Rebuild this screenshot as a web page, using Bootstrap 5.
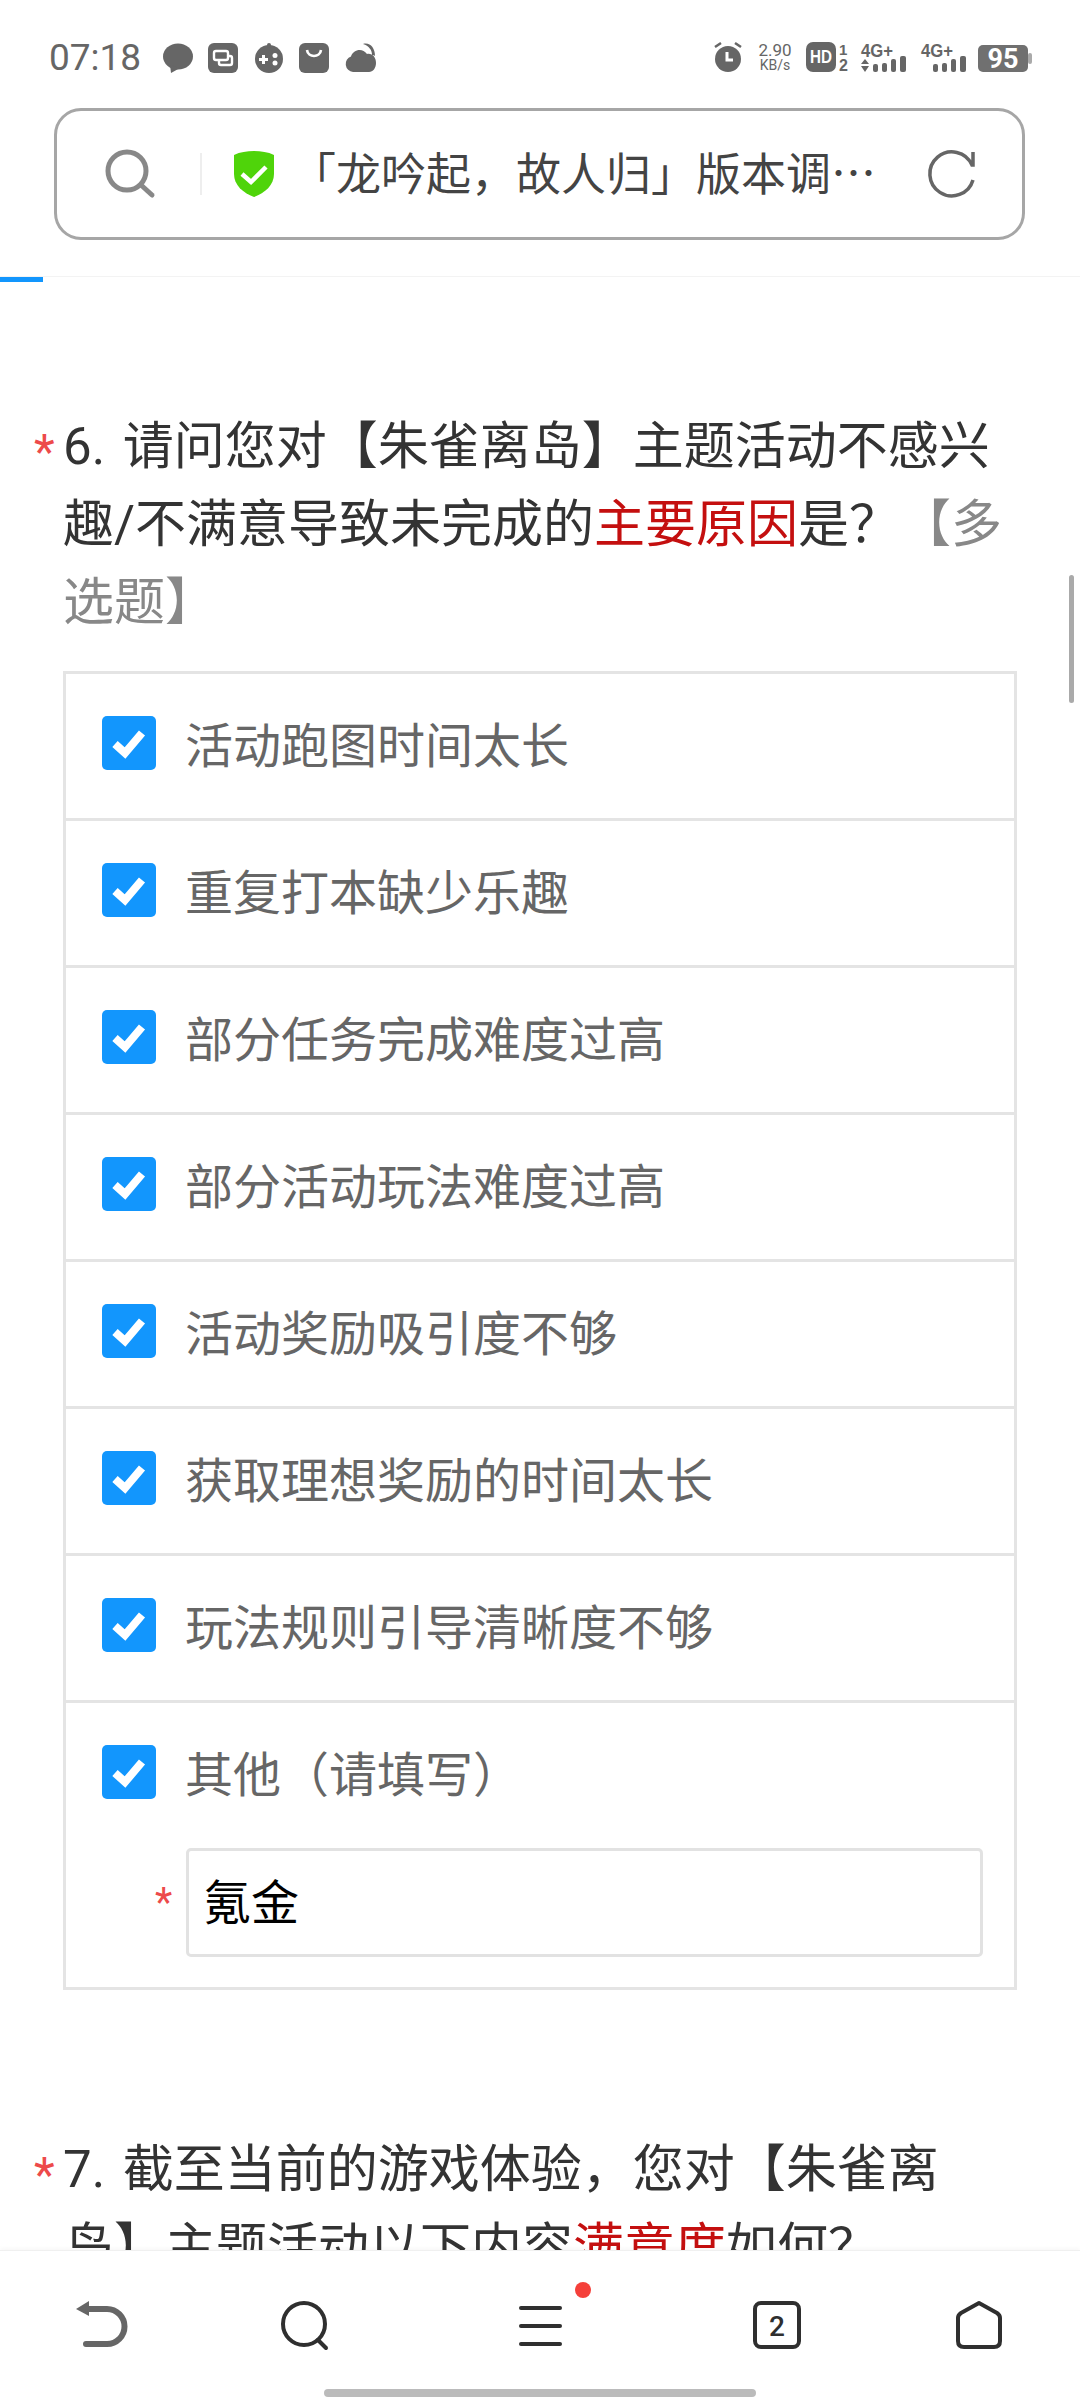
<!DOCTYPE html>
<html lang="zh-CN">

<head>
    <meta charset="UTF-8">
    <title>问卷</title>
    <meta name="viewport" content="width=device-width, initial-scale=1">

    <!-- Bootstrap CSS -->
    <link href="https://cdn.jsdelivr.net/npm/bootstrap@5.3.3/dist/css/bootstrap.min.css" rel="stylesheet">

    <style>
        html,
        body {
            height: 2400px;
            overflow: hidden;
        }

        body {
            position: relative;
            background: #fff;
            font-family: Roboto, "Noto Sans CJK SC", sans-serif;
            color: #333;
        }

        svg {
            display: block;
            flex: none;
            overflow: visible;
        }

        /* barra de estado */
        .status-row {
            height: 108px;
            padding: 42px 48px 36px 49px;
            color: #666;
        }

        .status-time {
            font-size: 37px;
            line-height: 32px;
            width: 98px;
        }

        .status-left {
            gap: 15.6px;
        }

        .speed-text {
            width: 42px;
            margin: 0 10px 0 11px;
            text-align: center;
            font-size: 17px;
            line-height: 15px;
            padding-top: 1px;
        }

        .speed-text span {
            display: block;
            font-size: 14px;
            line-height: 14px;
        }

        /* barra de direcciones */
        .addr-bar {
            height: 132px;
            margin: 0 55px 36px 54px;
            border: 3px solid #a6a6a6;
            border-radius: 27px;
            padding: 0 45px 0 48px;
        }

        .addr-sep {
            width: 2px;
            height: 42px;
            background: #eee;
            margin: 0 31px 0 45px;
        }

        .addr-text {
            font-size: 45px;
            line-height: 60px;
            color: #444;
            margin-left: 16px;
            padding-top: 4px;
            white-space: nowrap;
            flex: 1;
        }

        .load-track {
            height: 6px;
            border-radius: 0;
            background: #fff;
            border-top: 1px solid #f3f3f3;
            --bs-progress-bar-bg: #1296fd;
        }

        /* preguntas */
        .q-row {
            padding: 0 70px 0 34px;
            font-size: 51px;
            line-height: 78px;
        }

        .q-first {
            margin-top: 126px;
        }

        .q-second {
            margin-top: 141px;
        }

        .q-num {
            margin-right: 5px;
        }

        .q-star {
            width: 29px;
            flex: none;
            color: #ed4a4a;
            font-size: 48px;
            line-height: 78px;
            margin-top: 5px;
        }

        .q-red {
            color: #c40f0f;
        }

        .q-gray {
            color: #888;
        }

        .opt-list {
            margin: 29px 63px 0 63px;
            --bs-list-group-border-color: #e4e4e4;
            --bs-list-group-border-width: 3px;
            --bs-list-group-border-radius: 0;
            --bs-list-group-item-padding-x: 0;
            --bs-list-group-item-padding-y: 0;
        }

        .opt-item {
            height: 147px;
            padding: 2px 0 0 36px !important;
            display: flex;
            align-items: center;
            gap: 29px;
            font-size: 48px;
            color: #666;
        }

        .opt-item:first-child {
            height: 150px;
        }

        .opt-item:last-child {
            display: block;
            height: 287px;
            padding-top: 37px !important;
        }

        .opt-check.opt-check[type=checkbox] {
            width: 54px;
            height: 54px;
            margin: -9px 0 0;
            flex: none;
            border: 0;
            border-radius: 5px;
            --bs-form-check-bg-image: url("data:image/svg+xml,%3csvg xmlns='http://www.w3.org/2000/svg' viewBox='0 0 54 54'%3e%3cpath fill='none' stroke='%23fff' stroke-width='8' d='M13 28l10 9 17-20'/%3e%3c/svg%3e");
        }

        .opt-check:checked {
            background-color: #1296fd;
        }

        .other-row {
            gap: 29px;
        }

        .other-fill {
            margin: 36px 31px 0 53px;
        }

        .other-star {
            width: 31px;
            flex: none;
            color: #ed4a4a;
            font-size: 40px;
            line-height: 46px;
        }

        .other-input {
            height: 109px;
            padding: 0 0 8px 14px;
            font-size: 48px;
            color: #000;
            border: 3px solid #e2e2e2;
            border-radius: 5px;
            font-family: inherit;
        }

        /* scrollbar y barra inferior, van encima del contenido */
        .page-scroll {
            position: absolute;
            left: 1069px;
            top: 575px;
            width: 5px;
            height: 128px;
            background: #aaa;
            border-radius: 3px;
        }

        .bottom-bar {
            position: absolute;
            left: 0;
            right: 0;
            bottom: 0;
            height: 150px;
            background: #fff;
            border-top: 1px solid #f0f0f0;
            box-shadow: 0 -2px 4px rgba(0, 0, 0, .03);
            padding: 50px 0 0 76px;
        }

        .tool-search {
            margin-left: 154px;
        }

        .tool-menu {
            margin: 5px 0 0 191px;
        }

        .tool-tabs {
            margin-left: 191px;
        }

        .tool-home {
            margin-left: 155px;
        }

        .sig-second {
            margin-left: 12px;
        }

        .sig-first {
            margin-left: 11px;
        }

        .batt-icon {
            margin-left: 9px;
        }

        .menu-dot {
            position: absolute;
            left: 575px;
            top: 31px;
            width: 16px;
            height: 16px;
            border-radius: 50%;
            background: #f5403a;
        }

        .home-pill {
            position: absolute;
            left: 324px;
            bottom: 3px;
            width: 432px;
            height: 8px;
            border-radius: 4px;
            background: #bbb;
        }
    </style>
</head>

<body>

    <!-- Barra de estado -->
    <div class="status-row d-flex align-items-start justify-content-between">
        <div class="d-flex align-items-center status-left">
            <div class="status-time">07:18</div>
            <svg width="30" height="30" viewBox="0 0 30 30" fill="#666">
                <ellipse cx="15" cy="13.5" rx="15" ry="13" />
                <path d="M7 22l1 8 9-5z" />
            </svg>
            <svg width="30" height="30" viewBox="0 0 30 30">
                <rect width="30" height="30" rx="6" fill="#666" />
                <g fill="none" stroke="#fff" stroke-width="2.4">
                    <rect x="6" y="8" width="14" height="9" rx="2" />
                    <path d="M11 17v3a2 2 0 0 0 2 2h9a2 2 0 0 0 2-2v-5a2 2 0 0 0-2-2h-2" />
                </g>
            </svg>
            <svg width="30" height="30" viewBox="0 0 30 30" fill="#666">
                <circle cx="15" cy="16" r="14" />
                <rect x="13" y="0" width="4" height="5" rx="2" />
                <path fill="#fff" d="M8 12h3v3h3v3h-3v3H8v-3H5v-3h3z" />
                <circle cx="21" cy="12.500" r="2.500" fill="#fff" />
                <circle cx="21" cy="20" r="2.500" fill="#fff" />
            </svg>
            <svg width="30" height="30" viewBox="0 0 30 30">
                <rect width="30" height="30" rx="6" fill="#666" />
                <path d="M8 7c1 8 13 8 14 0" fill="none" stroke="#fff" stroke-width="2.600" />
            </svg>
            <svg width="31" height="30" viewBox="0 0 31 30" fill="#666">
                <path d="M8 29a8 8 0 0 1-2-15.500C8 7 17 4 22 11c5-1 9 3 9 9 0 5-3 9-7 9z" />
                <path d="M18 1c7-2 12 4 12 12-1-1-2-1-3-1 0-5-3-9-9-11z" />
            </svg>
        </div>
        <div class="d-flex align-items-center">
            <svg width="30" height="30" viewBox="0 0 30 30" fill="#666">
                <circle cx="15" cy="17" r="13" />
                <path d="M2 5l6-4M28 5l-6-4" stroke="#666" stroke-width="2.500" />
                <path d="M14 10v8h6" fill="none" stroke="#fff" stroke-width="3" />
            </svg>
            <div class="speed-text">2.90<span>KB/s</span></div>
            <svg width="44" height="30" viewBox="0 0 44 30" fill="#666">
                <rect width="30" height="30" rx="7" />
                <text x="4" y="21" fill="#fff" font-family="Liberation Sans" font-weight="700" font-size="18"
                    textLength="22" lengthAdjust="spacingAndGlyphs">HD</text>
                <text x="33" y="13" font-family="Liberation Sans" font-weight="700" font-size="15">1</text>
                <text x="33" y="29" font-family="Liberation Sans" font-weight="700" font-size="16">2</text>
            </svg>
            <svg class="sig-first" width="48" height="30" viewBox="0 0 48 30" fill="#666">
                <text x="0" y="15" font-family="Liberation Sans" font-weight="700" font-size="19"
                    textLength="32" lengthAdjust="spacingAndGlyphs">4G+</text>
                <path d="M4 17l4 5H0zM0 24h8l-4 6z" />
                <rect x="12" y="22" width="5" height="8" rx="2" />
                <rect x="21" y="21" width="5" height="9" rx="2" />
                <rect x="30" y="17" width="5" height="13" rx="2" />
                <rect x="39" y="14" width="6" height="16" rx="2" />
            </svg>
            <svg class="sig-second" width="48" height="30" viewBox="0 0 48 30" fill="#666">
                <text x="0" y="15" font-family="Liberation Sans" font-weight="700" font-size="19"
                    textLength="32" lengthAdjust="spacingAndGlyphs">4G+</text>
                <rect x="12" y="22" width="5" height="8" rx="2" />
                <rect x="21" y="21" width="5" height="9" rx="2" />
                <rect x="30" y="17" width="5" height="13" rx="2" />
                <rect x="39" y="14" width="6" height="16" rx="2" />
            </svg>
            <svg class="batt-icon" width="54" height="30" viewBox="0 0 54 30">
                <rect y="3" width="50" height="27" rx="5" fill="#707070" />
                <rect x="50" y="11" width="4" height="11" rx="2" fill="#aaa" />
                <text x="25" y="26" text-anchor="middle" fill="#fff" font-family="Roboto" font-weight="700"
                    font-size="27">95</text>
            </svg>
        </div>
    </div>

    <!-- Barra de direcciones -->
    <div class="addr-bar d-flex align-items-center">
        <svg width="50" height="48" viewBox="0 0 50 48" fill="none" stroke="#888" stroke-width="5">
            <circle cx="22" cy="21" r="19" />
            <path stroke-linecap="round" d="M36 35l11 10" />
        </svg>
        <div class="addr-sep"></div>
        <svg width="42" height="46" viewBox="0 0 42 46">
            <path fill="#4fd40a" d="M21 0c7 0 14 1 20 4v19c0 11-9 19-20 23C10 42 1 34 1 23V4c6-3 13-4 20-4z" />
            <path fill="none" stroke="#fff" stroke-width="4.500" d="M9 23l9 8 15-15" />
        </svg>
        <div class="addr-text">「龙吟起，故人归」版本调⋯</div>
        <svg width="50" height="48" viewBox="0 0 50 48" fill="none" stroke="#666" stroke-width="3.500">
            <path d="M46 2v13h-1A22 22 0 1 0 46 30" />
        </svg>
    </div>

    <div class="progress load-track">
        <div class="progress-bar" style="width: 4%"></div>
    </div>

    <!-- Pregunta 6 -->
    <div class="q-row q-first d-flex">
        <div class="q-star">*</div>
        <div><span class="q-num">6.</span> 请问您对【朱雀离岛】主题活动不感兴趣/不满意导致未完成的<span class="q-red">主要原因</span>是？<span class="q-gray">【多选题】</span></div>
    </div>

    <ul class="list-group opt-list">
        <li class="list-group-item opt-item"><input class="form-check-input opt-check" type="checkbox" checked>活动跑图时间太长</li>
        <li class="list-group-item opt-item"><input class="form-check-input opt-check" type="checkbox" checked>重复打本缺少乐趣</li>
        <li class="list-group-item opt-item"><input class="form-check-input opt-check" type="checkbox" checked>部分任务完成难度过高</li>
        <li class="list-group-item opt-item"><input class="form-check-input opt-check" type="checkbox" checked>部分活动玩法难度过高</li>
        <li class="list-group-item opt-item"><input class="form-check-input opt-check" type="checkbox" checked>活动奖励吸引度不够</li>
        <li class="list-group-item opt-item"><input class="form-check-input opt-check" type="checkbox" checked>获取理想奖励的时间太长</li>
        <li class="list-group-item opt-item"><input class="form-check-input opt-check" type="checkbox" checked>玩法规则引导清晰度不够</li>
        <li class="list-group-item opt-item">
            <div class="d-flex align-items-center other-row">
                <input class="form-check-input opt-check" type="checkbox" checked>其他（请填写）
            </div>
            <div class="other-fill d-flex align-items-center">
                <div class="other-star">*</div>
                <input class="form-control other-input" type="text" value="氪金">
            </div>
        </li>
    </ul>

    <!-- Pregunta 7 -->
    <div class="q-row q-second d-flex">
        <div class="q-star">*</div>
        <div><span class="q-num">7.</span> 截至当前的游戏体验，您对【朱雀离岛】主题活动以下内容<span class="q-red">满意度</span>如何？</div>
    </div>

    <div class="page-scroll"></div>

    <!-- Barra inferior -->
    <div class="bottom-bar d-flex align-items-start">
        <svg width="51" height="46" viewBox="0 0 51 46" fill="none" stroke="#666" stroke-width="6">
            <path fill="#666" stroke="none" d="M0 8L13 0v15z" />
            <path stroke-linecap="round" d="M12 8h19a17 17 0 0 1 0 35H10" />
        </svg>
        <svg class="tool-search" width="47" height="48" viewBox="0 0 47 48" fill="none" stroke="#2f2f2f" stroke-width="4">
            <circle cx="23" cy="23" r="21" />
            <path stroke-linecap="round" d="M37 39l8 8" />
        </svg>
        <svg class="tool-menu" width="43" height="42" viewBox="0 0 43 42" fill="#2f2f2f">
            <rect width="43" height="4" rx="2" />
            <rect y="18" width="43" height="4" rx="2" />
            <rect y="36" width="43" height="4" rx="2" />
        </svg>
        <svg class="tool-tabs" width="48" height="48" viewBox="0 0 48 48">
            <rect x="2" y="2" width="44" height="44" rx="6" fill="none" stroke="#2f2f2f" stroke-width="4" />
            <text x="24" y="35" text-anchor="middle" fill="#2f2f2f" font-family="Roboto" font-weight="500"
                font-size="28">2</text>
        </svg>
        <svg class="tool-home" width="46" height="48" viewBox="0 0 46 48" fill="none" stroke="#2f2f2f" stroke-width="4">
            <path stroke-linejoin="round" d="M23 2L41 12q3 2 3 5v23q0 6-6 6H8q-6 0-6-6V17q0-3 3-5z" />
        </svg>
        <div class="menu-dot"></div>
        <div class="home-pill"></div>
    </div>

    <!-- Bootstrap JS -->
    <script src="https://cdn.jsdelivr.net/npm/bootstrap@5.3.3/dist/js/bootstrap.bundle.min.js"></script>
</body>

</html>
